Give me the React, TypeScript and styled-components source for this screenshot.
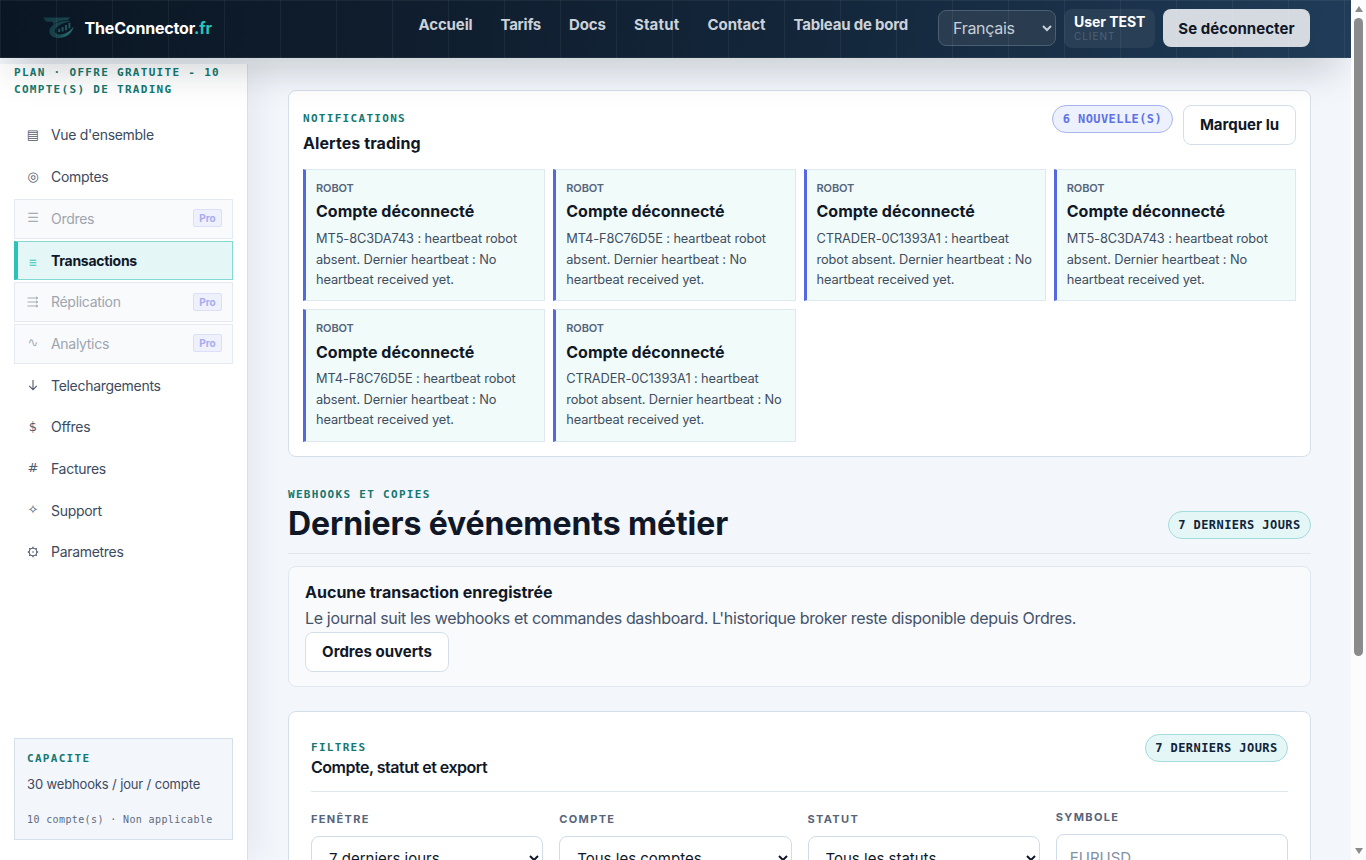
import React from "react";
import styled, { createGlobalStyle, css } from "styled-components";

const sans = `Inter, "Liberation Sans", sans-serif`;
const mono = `"DejaVu Sans Mono", "Liberation Mono", monospace`;

const GlobalStyle = createGlobalStyle`
  *, *::before, *::after { box-sizing: border-box; }
  body { margin: 0; overflow: hidden; background: #f3f6fb; font-family: ${sans}; color: #101828; }
  h1, h2, h3, p, strong { margin: 0; }
  button, select, input { font-family: inherit; }
`;

const Screen = styled.div`
  display: grid;
  grid-template-columns: 1351px 15px;
  height: 860px;
  overflow: hidden;
`;

const Page = styled.div`
  display: flex;
  flex-direction: column;
  height: 860px;
  overflow: hidden;
  background: #f3f6fb;
`;

/* ---------- header ---------- */

const Header = styled.header`
  position: relative;
  z-index: 2;
  flex: none;
  display: flex;
  align-items: center;
  height: 58px;
  padding: 0 41px 2px 43px;
  background: linear-gradient(100deg, #0a1623 0%, #0f1d2d 28%, #13263a 60%, #203c58 100%);
  box-shadow: 0 20px 40px -14px rgba(10, 25, 35, 0.27);

  &::after {
    content: "";
    position: absolute;
    inset: 0;
    pointer-events: none;
    background-image:
      linear-gradient(rgba(255, 255, 255, 0.055) 1px, transparent 1px),
      linear-gradient(90deg, rgba(255, 255, 255, 0.055) 1px, transparent 1px);
    background-size: 56px 57px, 56px 56px;
  }
`;

const Brand = styled.a`
  display: flex;
  align-items: center;
  gap: 9.5px;
  width: 375.5px;
  color: #fff;
  font-size: 16px;
  font-weight: 700;
  letter-spacing: -0.18px;
  white-space: nowrap;

  em { font-style: normal; color: #29c4ba; }
`;

const Nav = styled.nav`
  display: flex;
  gap: 28px;
  width: 519.5px;
  padding-bottom: 6px;
`;

const NavLink = styled.a<{ $track?: string }>`
  color: #cbd2d9;
  font-size: 15px;
  font-weight: 700;
  line-height: 20px;
  letter-spacing: ${(p) => p.$track ?? "-0.13px"};
  white-space: nowrap;
`;

const LanguageSelect = styled.select`
  width: 118px;
  height: 36px;
  margin-right: 8px;
  padding: 0 10px;
  border: 1px solid #4c5f70;
  border-radius: 8px;
  background-color: #2a3d50;
  color: #c8cfd7;
  font-size: 16px;
  letter-spacing: -0.3px;
`;

const UserBadge = styled.div`
  display: flex;
  flex-direction: column;
  width: 91px;
  height: 39px;
  margin-right: 8px;
  padding: 4px 10px;
  border-radius: 8px;
  background: #293f56;
  color: #fff;
  font-size: 14px;
  font-weight: 700;
  line-height: 18px;
  letter-spacing: -0.05px;
  white-space: nowrap;

  small {
    color: #4d6074;
    font-size: 10px;
    font-weight: 400;
    line-height: 11px;
    letter-spacing: 0.95px;
  }
`;

const LogoutButton = styled.button`
  width: 147px;
  height: 38px;
  padding: 0;
  border: 0;
  border-radius: 8px;
  background: #d5dae0;
  color: #101828;
  font-size: 15px;
  font-weight: 700;
  letter-spacing: 0.05px;
`;

/* ---------- sidebar ---------- */

const Body = styled.div`
  display: flex;
  flex: 1;
  min-height: 0;
`;

const Sidebar = styled.aside`
  display: flex;
  flex-direction: column;
  flex: none;
  width: 248px;
  margin-top: 6px;
  padding: 0 14px 20px;
  border-right: 1px solid #d5e0ea;
  background: #fff;
  box-shadow: 10px 0 30px rgba(15, 40, 60, 0.06);
`;

const Eyebrow = styled.div`
  color: #14786f;
  font-family: ${mono};
  font-size: 11px;
  font-weight: 700;
  line-height: 17px;
  letter-spacing: 1.3px;
  text-transform: uppercase;
`;

const Menu = styled.nav`
  display: flex;
  flex-direction: column;
  gap: 2px;
  margin-top: 17.7px;
`;

const MenuItem = styled.a<{ $state?: "active" | "locked" }>`
  display: flex;
  align-items: center;
  gap: 10px;
  height: 39.7px;
  padding: 0 10px 1.2px;
  border: 1px solid transparent;
  color: #3c4a5e;
  font-size: 14px;
  letter-spacing: -0.3px;

  ${(p) =>
    p.$state === "active" &&
    css`
      padding-left: 7px;
      border: 1px solid #85d8d2;
      border-left: 4px solid #2bc2b7;
      background: #e4f6f6;
      color: #101828;
      font-weight: 700;
      letter-spacing: -0.27px;
    `}
  ${(p) =>
    p.$state === "locked" &&
    css`
      border-color: #e5eaf2;
      background: #f9fafc;
      color: #9ea5af;
    `}
`;

const MenuIcon = styled.span<{ $active?: boolean }>`
  display: flex;
  align-items: center;
  justify-content: center;
  flex: none;
  width: 16px;
  color: ${(p) => (p.$active ? "#2bc2b7" : "inherit")};
  opacity: ${(p) => (p.$active ? 1 : 0.9)};
  font-family: "DejaVu Sans", sans-serif;
  font-size: 13px;
  font-weight: 400;
  line-height: 16px;
  letter-spacing: 0;
`;

const ProTag = styled.span`
  margin-left: auto;
  width: 29px;
  height: 18px;
  border: 1px solid #dcdff8;
  border-radius: 2px;
  background: #eef0fc;
  color: #a6adef;
  font-size: 10px;
  font-weight: 700;
  line-height: 16px;
  letter-spacing: 0;
  text-align: center;
`;

const Capacity = styled.div`
  margin-top: auto;
  height: 102.4px;
  padding: 11px 12px;
  border: 1px solid #d5e0ea;
  background: #f3f6fb;

  p {
    margin-top: 7px;
    color: #3c4a5e;
    font-size: 13px;
    line-height: 20px;
    letter-spacing: -0.14px;
  }

  small {
    display: block;
    margin-top: 18px;
    color: #5d6b7e;
    font-family: ${mono};
    font-size: 10px;
    line-height: 16px;
    letter-spacing: 0.38px;
    white-space: nowrap;
  }
`;

/* ---------- content ---------- */

const Content = styled.main`
  position: relative;
  flex: 1;
  min-width: 0;
  padding: 32px 40px 0;
  overflow: hidden;
`;

const Card = styled.section<{ $muted?: boolean }>`
  border: 1px solid ${(p) => (p.$muted ? "#dfe8f0" : "#d3dfeb")};
  border-radius: 8px;
  background: ${(p) => (p.$muted ? "#f9fafc" : "#fff")};
`;

const AlertsCard = styled(Card)`
  height: 367px;
  padding: 14px;
`;

const AlertsHead = styled.div`
  display: flex;
  align-items: flex-start;
  gap: 10px;
  height: 64px;

  button { padding-bottom: 1px; }
`;

const HeadTitles = styled.div`
  flex: 1;
  padding-top: 5px;
`;

const CardTitle = styled.h3<{ $tight?: boolean }>`
  font-size: 16px;
  font-weight: ${(p) => (p.$tight ? 600 : 700)};
  line-height: 26px;
  letter-spacing: ${(p) => (p.$tight ? "-0.49px" : "0.02px")};
`;

const AlertsTitle = styled(CardTitle)`
  margin-top: 3px;
  letter-spacing: 0.08px;
`;

const Pill = styled.span<{ $indigo?: boolean }>`
  flex: none;
  height: 28px;
  padding: 0 ${(p) => (p.$indigo ? 9.9 : 9.4)}px;
  border: 1px solid ${(p) => (p.$indigo ? "#a9b5ee" : "#a3dcdc")};
  border-radius: 14px;
  background: ${(p) => (p.$indigo ? "#edf1fe" : "#e4f6f6")};
  color: ${(p) => (p.$indigo ? "#6071e4" : "#10243a")};
  font-family: ${mono};
  font-size: 12px;
  font-weight: 700;
  line-height: 26px;
  letter-spacing: 0.42px;
  white-space: nowrap;
`;

const Button = styled.button<{ $width: number }>`
  width: ${(p) => p.$width}px;
  height: 40px;
  padding: 0;
  border: 1px solid #d3dfeb;
  border-radius: 8px;
  background: #fff;
  color: #101828;
  font-size: 15px;
  font-weight: 700;
`;

const AlertGrid = styled.div`
  display: grid;
  grid-template-columns: repeat(4, 1fr);
  grid-auto-rows: 132.4px;
  gap: 8px;
`;

const Alert = styled.article`
  padding: 9.6px 10px 8px;
  border: 1px solid #dde9ee;
  border-left: 3px solid #5468e0;
  background: #f1fbfa;

  small {
    display: block;
    color: #56657a;
    font-size: 11px;
    font-weight: 600;
    line-height: 17px;
    letter-spacing: -0.1px;
  }

  h4 {
    margin: 2.8px 0 4.7px;
    font-size: 16px;
    font-weight: 700;
    line-height: 25px;
    letter-spacing: 0;
  }

  p {
    color: #3f4d60;
    font-size: 12.8px;
    line-height: 20.5px;
    letter-spacing: -0.09px;
  }
`;

const SectionHead = styled.div`
  display: flex;
  align-items: flex-end;
  justify-content: space-between;
  height: 69px;
  margin: 28px 0 12px;
  padding-bottom: 14px;
  border-bottom: 1px solid #dfe6ee;
`;

const SectionTitle = styled.h2`
  margin: 2px 0 -3px;
  font-size: 32px;
  font-weight: 700;
  line-height: 37px;
  letter-spacing: -0.1px;
`;

const EmptyCard = styled(Card)`
  height: 121px;
  padding: 12px 16px;

  p {
    color: #44526a;
    font-size: 16px;
    line-height: 26px;
    letter-spacing: -0.34px;
  }

  button {
    margin-top: 1px;
    padding-bottom: 2px;
  }
`;

const FiltersCard = styled(Card)`
  height: 300px;
  margin-top: 24px;
  padding: 22px;
`;

const FiltersHead = styled.div`
  display: flex;
  justify-content: space-between;
  height: 58px;
  border-bottom: 1px solid #dfe8f0;
`;

const FiltersTitles = styled.div`
  padding-top: 5px;

  h3 { margin-top: -2px; }
`;

const Filters = styled.div`
  display: grid;
  grid-template-columns: repeat(4, 1fr);
  gap: 16px;
  padding-top: 16px;
`;

const Field = styled.label<{ $lift?: boolean }>`
  display: flex;
  flex-direction: column;
  gap: 8px;
  margin-top: ${(p) => (p.$lift ? 0 : 2)}px;
  color: #56657a;
  font-size: 11px;
  font-weight: 700;
  line-height: 18px;
  letter-spacing: 1.35px;
`;

const fieldBox = css`
  width: 100%;
  padding: 0 13px;
  border: 1px solid #cfdcea;
  border-radius: 8px;
  background-color: #fff;
  color: #101828;
  font-size: 15px;
  font-weight: 400;
`;

const FieldSelect = styled.select`
  ${fieldBox}
  height: 44px;
`;

const FieldInput = styled.input`
  ${fieldBox}
  height: 46px;
  &::placeholder { color: #8290a3; }
`;

/* ---------- scrollbar ---------- */

const ScrollTrack = styled.div`
  display: flex;
  flex-direction: column;
  align-items: center;
  background: #fcfcfc;
  padding: 6px 0 6px;
`;

const ScrollArrow = styled.i<{ $down?: boolean }>`
  border: 4px solid transparent;
  ${(p) =>
    p.$down
      ? css`border-top: 6px solid #8b8b8b; border-bottom: 0; margin-top: auto;`
      : css`border-bottom: 6px solid #8b8b8b; border-top: 0;`}
`;

const ScrollThumb = styled.div`
  width: 9px;
  height: 638px;
  margin-top: 6px;
  border-radius: 5px;
  background: #8b8b8b;
`;

const Logo = () => (
  <svg width="32" height="22" viewBox="0 0 32 22" fill="none">
    <defs>
      <linearGradient id="brand" x1="0" y1="0" x2="32" y2="18" gradientUnits="userSpaceOnUse">
        <stop stopColor="#143841" />
        <stop offset="0.6" stopColor="#18454d" />
        <stop offset="1" stopColor="#2f8785" />
      </linearGradient>
    </defs>
    <path d="M0 0.6H27L24.6 3.2C18 2.8 13.5 4.6 10.5 7.4L9.8 4.8H3.2Z" fill="url(#brand)" />
    <path
      d="M27 4.2C16 2.8 6.4 8.2 6.4 14.2C6.6 21.6 19 23.4 26 17.2C28.6 15 30.2 12.4 30.6 9.6C26.6 15.8 19.4 18.6 14.2 17C8.6 15 12.6 7.4 27 4.2Z"
      fill="url(#brand)"
    />
    <path d="M16.2 15V11.8M19.6 14.6V10M23 13.2V8M26.4 11.2V5.8" stroke="#22595f" strokeWidth="1.9" />
  </svg>
);

const DownIcon = () => (
  <svg width="10" height="12" viewBox="0 0 10 12" fill="none" stroke="currentColor" strokeWidth="1.1">
    <path d="M5 1V10.4M1.2 6.8L5 10.6L8.8 6.8" />
  </svg>
);

const LinesIcon = () => (
  <svg width="8" height="12" viewBox="0 0 8 12" stroke="currentColor" strokeWidth="1.1">
    <path d="M0.7 6.3H7.3M0.7 8.8H7.3M0.7 11.3H7.3" />
  </svg>
);

const TripleArrowIcon = () => (
  <svg width="12" height="12" viewBox="0 0 12 12" stroke="currentColor" strokeWidth="1">
    <path d="M.5 2H11M.5 6H11M.5 10H11" />
    <path d="M9.2.6L11 2L9.2 3.4M9.2 4.6L11 6L9.2 7.4M9.2 8.6L11 10L9.2 11.4" fill="currentColor" strokeWidth="0.5" />
  </svg>
);

const GearIcon = () => (
  <svg width="12" height="12" viewBox="0 0 12 12" fill="none" stroke="currentColor" strokeWidth="1">
    <circle cx="6" cy="6" r="3.9" />
    <path
      strokeWidth="1.3"
      d="M6 .8V2M6 10v1.2M.8 6H2M10 6h1.2M2.3 2.3l.9.9M8.8 8.8l.9.9M2.3 9.7l.9-.9M8.8 3.2l.9-.9"
    />
    <circle cx="6" cy="6" r=".8" fill="currentColor" stroke="none" />
  </svg>
);

type Item = { icon: React.ReactNode; label: string; state?: "active" | "locked" };

const menu: Item[] = [
  { icon: "▤", label: "Vue d'ensemble" },
  { icon: "◎", label: "Comptes" },
  { icon: "☰", label: "Ordres", state: "locked" },
  { icon: <LinesIcon />, label: "Transactions", state: "active" },
  { icon: <TripleArrowIcon />, label: "Réplication", state: "locked" },
  { icon: "∿", label: "Analytics", state: "locked" },
  { icon: <DownIcon />, label: "Telechargements" },
  { icon: "$", label: "Offres" },
  { icon: "#", label: "Factures" },
  { icon: "✧", label: "Support" },
  { icon: <GearIcon />, label: "Parametres" },
];

const accounts = [
  "MT5-8C3DA743",
  "MT4-F8C76D5E",
  "CTRADER-0C1393A1",
  "MT5-8C3DA743",
  "MT4-F8C76D5E",
  "CTRADER-0C1393A1",
];

export default function App() {
  return (
    <Screen>
      <GlobalStyle />
      <Page>
        <Header>
          <Brand>
            <Logo />
            <span>TheConnector<em>.fr</em></span>
          </Brand>
          <Nav>
            <NavLink>Accueil</NavLink>
            <NavLink $track="-0.25px">Tarifs</NavLink>
            <NavLink $track="-0.1px">Docs</NavLink>
            <NavLink $track="0.18px">Statut</NavLink>
            <NavLink $track="-0.03px">Contact</NavLink>
            <NavLink $track="-0.2px">Tableau de bord</NavLink>
          </Nav>
          <LanguageSelect defaultValue="fr">
            <option value="fr">Français</option>
          </LanguageSelect>
          <UserBadge>
            User TEST
            <small>CLIENT</small>
          </UserBadge>
          <LogoutButton>Se déconnecter</LogoutButton>
        </Header>
        <Body>
          <Sidebar>
            <Eyebrow>Plan · Offre gratuite - 10 compte(s) de trading</Eyebrow>
            <Menu>
              {menu.map((m) => (
                <MenuItem key={m.label} $state={m.state}>
                  <MenuIcon $active={m.state === "active"}>{m.icon}</MenuIcon>
                  {m.label}
                  {m.state === "locked" && <ProTag>Pro</ProTag>}
                </MenuItem>
              ))}
            </Menu>
            <Capacity>
              <Eyebrow>Capacite</Eyebrow>
              <p>30 webhooks / jour / compte</p>
              <small>10 compte(s) · Non applicable</small>
            </Capacity>
          </Sidebar>
          <Content>
            <AlertsCard>
              <AlertsHead>
                <HeadTitles>
                  <Eyebrow>Notifications</Eyebrow>
                  <AlertsTitle>Alertes trading</AlertsTitle>
                </HeadTitles>
                <Pill $indigo>6 NOUVELLE(S)</Pill>
                <Button $width={113}>Marquer lu</Button>
              </AlertsHead>
              <AlertGrid>
                {accounts.map((account, i) => (
                  <Alert key={i}>
                    <small>ROBOT</small>
                    <h4>Compte déconnecté</h4>
                    <p>{`${account} : heartbeat robot absent. Dernier heartbeat : No heartbeat received yet.`}</p>
                  </Alert>
                ))}
              </AlertGrid>
            </AlertsCard>
            <SectionHead>
              <div>
                <Eyebrow>Webhooks et copies</Eyebrow>
                <SectionTitle>Derniers événements métier</SectionTitle>
              </div>
              <Pill>7 DERNIERS JOURS</Pill>
            </SectionHead>
            <EmptyCard $muted>
              <CardTitle>Aucune transaction enregistrée</CardTitle>
              <p>Le journal suit les webhooks et commandes dashboard. L'historique broker reste disponible depuis Ordres.</p>
              <Button $width={144}>Ordres ouverts</Button>
            </EmptyCard>
            <FiltersCard>
              <FiltersHead>
                <FiltersTitles>
                  <Eyebrow>Filtres</Eyebrow>
                  <CardTitle $tight>Compte, statut et export</CardTitle>
                </FiltersTitles>
                <Pill>7 DERNIERS JOURS</Pill>
              </FiltersHead>
              <Filters>
                <Field>
                  FENÊTRE
                  <FieldSelect><option>7 derniers jours</option></FieldSelect>
                </Field>
                <Field>
                  COMPTE
                  <FieldSelect><option>Tous les comptes</option></FieldSelect>
                </Field>
                <Field>
                  STATUT
                  <FieldSelect><option>Tous les statuts</option></FieldSelect>
                </Field>
                <Field $lift>
                  SYMBOLE
                  <FieldInput placeholder="EURUSD" />
                </Field>
              </Filters>
            </FiltersCard>
          </Content>
        </Body>
      </Page>
      <ScrollTrack>
        <ScrollArrow />
        <ScrollThumb />
        <ScrollArrow $down />
      </ScrollTrack>
    </Screen>
  );
}
